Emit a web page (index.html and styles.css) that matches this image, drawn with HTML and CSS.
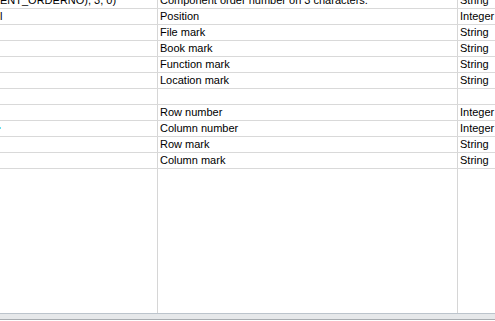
FILE: index.html
```html
<!DOCTYPE html>
<html lang="en">
<head>
  <meta charset="UTF-8" />
  <title>Fields</title>
  <link rel="stylesheet" href="styles.css">
</head>
<body>
  <div class="view">
    <div class="grid">
      <div class="row first">
        <div class="cell expr">ENT_ORDERNO), 3, 0)</div>
        <div class="cell">Component order number on 3 characters.</div>
        <div class="cell">String</div>
      </div>
      <div class="row">
        <div class="cell expr">l</div>
        <div class="cell">Position</div>
        <div class="cell">Integer</div>
      </div>
      <div class="row">
        <div class="cell expr"></div>
        <div class="cell">File mark</div>
        <div class="cell">String</div>
      </div>
      <div class="row">
        <div class="cell expr"></div>
        <div class="cell">Book mark</div>
        <div class="cell">String</div>
      </div>
      <div class="row">
        <div class="cell expr"></div>
        <div class="cell">Function mark</div>
        <div class="cell">String</div>
      </div>
      <div class="row">
        <div class="cell expr"></div>
        <div class="cell">Location mark</div>
        <div class="cell">String</div>
      </div>
      <div class="row">
        <div class="cell expr"></div>
        <div class="cell"></div>
        <div class="cell"></div>
      </div>
      <div class="row">
        <div class="cell expr"></div>
        <div class="cell">Row number</div>
        <div class="cell">Integer</div>
      </div>
      <div class="row">
        <div class="cell expr"><span class="dot"></span></div>
        <div class="cell">Column number</div>
        <div class="cell">Integer</div>
      </div>
      <div class="row">
        <div class="cell expr"></div>
        <div class="cell">Row mark</div>
        <div class="cell">String</div>
      </div>
      <div class="row">
        <div class="cell expr"></div>
        <div class="cell">Column mark</div>
        <div class="cell">String</div>
      </div>
      <div class="row filler">
        <div class="cell expr"></div>
        <div class="cell"></div>
        <div class="cell"></div>
      </div>
    </div>
    <div class="hscroll"></div>
  </div>
</body>
</html>
```

FILE: styles.css
```css
html, body {
  margin: 0;
  height: 100%;
  overflow: hidden;
  background: #ffffff;
  font-family: "Liberation Sans", Arial, sans-serif;
  font-size: 11px;
  color: #000000;
}

.view {
  height: 321px;
  display: flex;
  flex-direction: column;
}

.grid {
  flex: 1;
  display: flex;
  flex-direction: column;
  margin-top: -7px;
  overflow: hidden;
}

.row {
  display: grid;
  grid-template-columns: 157px 300px 60px;
  height: 15px;
  border-bottom: 1px solid #d9d9d9;
  flex: none;
}

.row.filler {
  flex: 1;
  border-bottom: none;
}

.cell {
  line-height: 15px;
  padding-left: 2px;
  border-left: 1px solid #d6d6d6;
  white-space: nowrap;
  overflow: hidden;
}

.cell.expr {
  border-left: none;
  padding-left: 0;
}

/* edge of a glyph scrolled out of view */
.dot {
  display: inline-block;
  width: 1px;
  height: 2px;
  margin-top: 6px;
  vertical-align: top;
  background: #66e0f0;
}

.hscroll {
  height: 5px;
  border-top: 1px solid #bcc4cc;
  border-bottom: 1px solid #a8acb0;
  background: #e6e8ea;
  margin-bottom: 1px;
}
```
